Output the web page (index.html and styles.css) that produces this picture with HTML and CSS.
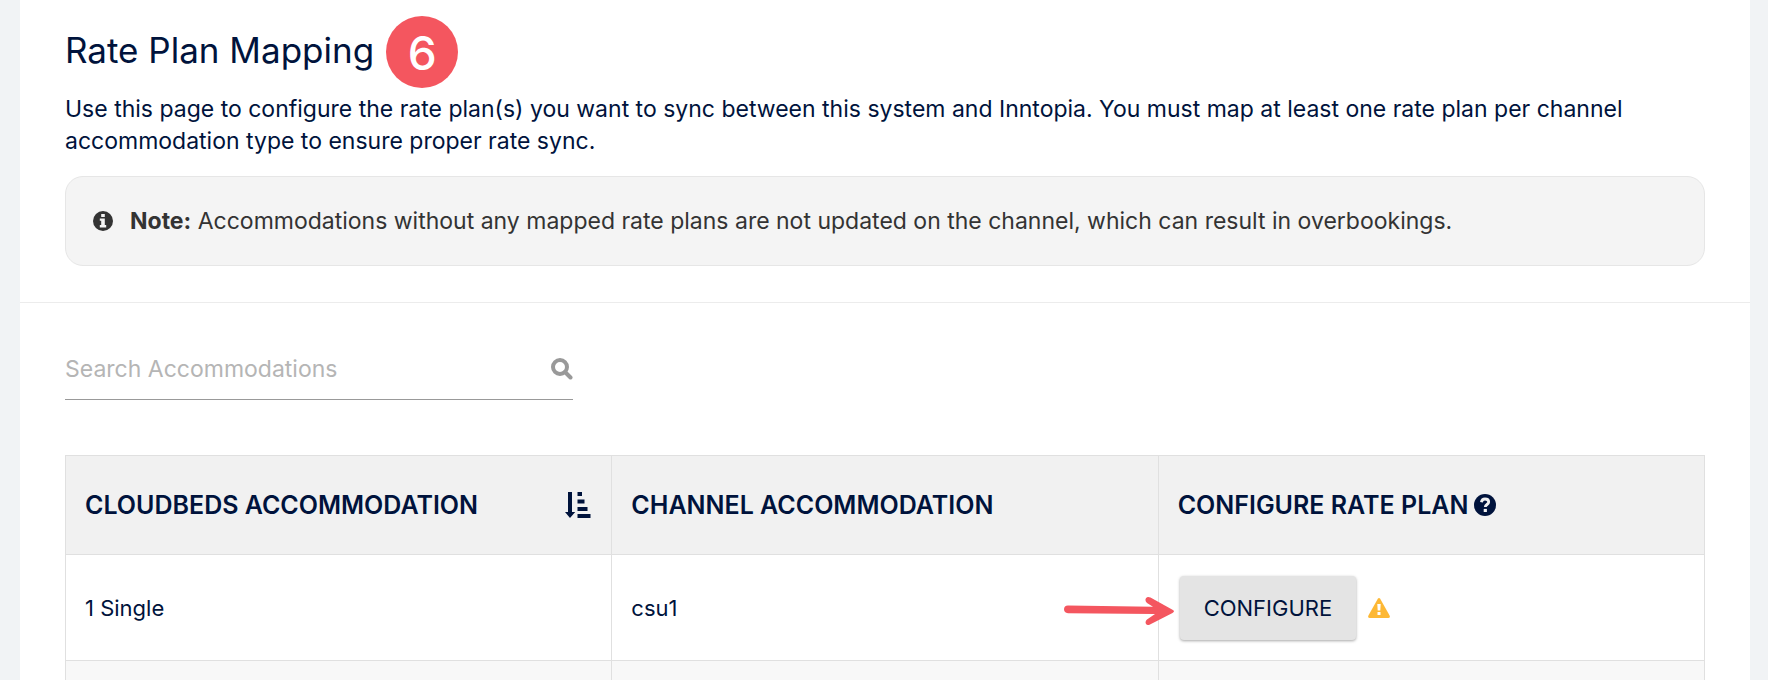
FILE: index.html
```
<!DOCTYPE html>
<html lang="en">
<head>
    <meta charset="UTF-8">
    <title>Rate Plan Mapping</title>
    <link rel="stylesheet" href="styles.css">
</head>
<body>
<main class="page">
    <section class="intro">
        <div class="title">
            <h1>Rate Plan Mapping</h1>
            <span class="step">6</span>
        </div>
        <p class="desc">Use this page to configure the rate plan(s) you want to sync between this system and Inntopia. You must map at least one rate plan per channel accommodation type to ensure proper rate sync.</p>
        <div class="note">
            <svg class="icon_info" viewBox="0 0 20 20" aria-hidden="true">
                <circle cx="10" cy="10" r="10" fill="#333"/>
                <path d="M8.2 3h3.6v3H8.2zM6.8 7.5h5V14h1.4v2.4H6.8V14h1.4v-4.2H6.8z" fill="#f4f4f4"/>
            </svg>
            <p><strong>Note:</strong> Accommodations without any mapped rate plans are not updated on the channel, which can result in overbookings.</p>
        </div>
    </section>
    <section class="content">
        <form class="search">
            <input type="text" placeholder="Search Accommodations" aria-label="Search Accommodations">
            <button type="button" aria-label="Search">
                <svg viewBox="0 0 22 22" aria-hidden="true">
                    <circle cx="9" cy="9" r="7" fill="none" stroke="#999" stroke-width="4"/>
                    <path d="M14 14l5.5 5.5" stroke="#999" stroke-width="4" stroke-linecap="round"/>
                </svg>
            </button>
        </form>
        <table class="rates">
            <thead>
            <tr>
                <th>
                    <div class="head sort">
                        <span>CLOUDBEDS ACCOMMODATION</span>
                        <svg class="icon_sort" viewBox="0 0 26 26" aria-hidden="true">
                            <path d="M3 0h4v20h3.200L5 26 0 20h3zM12.500 0h4.500v4h-4.500zM12.500 7.500h7v4h-7zM12.500 15h10v4h-10zM12.500 22h13v4h-13z" fill="#00133c"/>
                        </svg>
                    </div>
                </th>
                <th><div class="head">CHANNEL ACCOMMODATION</div></th>
                <th>
                    <div class="head">
                        <span>CONFIGURE RATE PLAN</span>
                        <svg class="icon_help" viewBox="0 0 22 22" aria-hidden="true">
                            <circle cx="11" cy="11" r="11" fill="#00133c"/>
                            <path d="M7.400 8.200C7.800 6 9.200 5 11 5c2 0 3.700 1.100 3.700 3 0 2.500-3.400 2.500-3.400 5" fill="none" stroke="#f1f1f1" stroke-width="2.800"/>
                            <path d="M9.700 14.900h3.200V18H9.700z" fill="#f1f1f1"/>
                        </svg>
                    </div>
                </th>
            </tr>
            </thead>
            <tbody>
            <tr>
                <td>1 Single</td>
                <td>csu1</td>
                <td>
                    <div class="action">
                        <svg class="arrow" viewBox="0 0 110 30" aria-hidden="true">
                            <path d="M4 9.500L89 10.800L83 7Q80.500 4.500 82 2.200Q83.500 .2 86.500 1.600L108.500 13.800Q111.500 15.300 108.500 17L86 28.500Q83 30 81.800 27.500Q81 25 83 23.500L91 18L4 17.300Q0 16.800 0 13.300Q0 9.800 4 9.500z" fill="#f4565f"/>
                        </svg>
                        <button type="button" class="btn">CONFIGURE</button>
                        <svg class="icon_warn" viewBox="0 0 22 20" aria-hidden="true">
                            <path d="M9.800.8q1.200-1.500 2.400 0l9.500 17q.7 2.200-1.500 2.200H1.800Q-.4 20 .3 17.800z" fill="#fdb835"/>
                            <path d="M9.300 6h3.400l-.4 6.500H9.700zM9.500 14h3v3h-3z" fill="#fff"/>
                        </svg>
                    </div>
                </td>
            </tr>
            <tr class="more">
                <td></td>
                <td></td>
                <td></td>
            </tr>
            </tbody>
        </table>
    </section>
</main>
</body>
</html>
```
FILE: styles.css
```
*{
    margin: 0;
    padding: 0;
    box-sizing: border-box;
}

body{
    background-color: #f1f3f5;
    color: #00133c;
    font-family: Inter, "Liberation Sans", sans-serif;
    font-size: 23px;
    line-height: 32px;
}

.page{
    margin: 0 18px 0 20px;
    min-height: 100vh;
    background-color: #fff;
}

.intro{
    padding: 16px 45px 36px;
    border-bottom: 1px solid #ececec;
}

.title{
    display: flex;
    align-items: center;
    gap: 12px;
}

.title h1{
    padding-bottom: 4px;
    font-size: 35px;
    font-weight: 400;
    line-height: 40px;
}

.step{
    width: 72px;
    height: 72px;
    border-radius: 50%;
    background-color: #f4565f;
    color: #fff;
    font-size: 46px;
    font-weight: 500;
    line-height: 74px;
    text-align: center;
}

.desc{
    margin: 5px 0 19px;
}

.note{
    display: flex;
    align-items: center;
    gap: 17px;
    padding: 28px 27px;
    border: 1px solid #e6e6e6;
    border-radius: 18px;
    background-color: #f4f4f4;
    color: #333;
}

.icon_info{
    width: 20px;
    height: 20px;
}

.content{
    padding: 40px 45px 0;
}

.search{
    display: flex;
    align-items: center;
    width: 31%;
    height: 57px;
    padding-bottom: 4px;
    border-bottom: 1px solid #999;
}

.search input{
    flex: 1;
    min-width: 0;
    border: none;
    outline: none;
    background: none;
    color: #00133c;
    font: inherit;
}

.search input::placeholder{
    color: #b5b5b5;
}

.search button{
    border: none;
    background: none;
    line-height: 0;
}

.search svg{
    width: 22px;
    height: 22px;
}

.rates{
    width: 100%;
    margin-top: 55px;
    table-layout: fixed;
    border-collapse: collapse;
}

.rates th,
.rates td{
    padding: 0 20px 0 19px;
    border: 1px solid #e0e0e0;
    text-align: left;
}

.rates th{
    height: 99px;
    background-color: #f1f1f1;
    font-size: 25px;
    font-weight: 600;
}

.rates td{
    height: 106px;
    font-size: 22px;
}

.rates .more td{
    height: 20px;
    border-bottom: none;
    background-color: #f8f8f8;
}

.head{
    display: flex;
    align-items: center;
    gap: 6px;
}

.sort{
    justify-content: space-between;
}

.icon_sort{
    width: 26px;
    height: 26px;
}

.icon_help{
    width: 22px;
    height: 22px;
}

.action{
    position: relative;
    display: flex;
    align-items: center;
    gap: 12px;
    margin-left: 2px;
}

.btn{
    padding: 16px 24px;
    border: none;
    border-radius: 4px;
    background-color: #e4e4e4;
    box-shadow: 0 1px 3px rgba(0, 0, 0, .35);
    color: #00133c;
    font: inherit;
}

.icon_warn{
    width: 22px;
    height: 20px;
}

/* points at the button from the cell before it */
.arrow{
    position: absolute;
    top: 20px;
    right: 100%;
    width: 110px;
    height: 30px;
    margin-right: 6px;
}
```
